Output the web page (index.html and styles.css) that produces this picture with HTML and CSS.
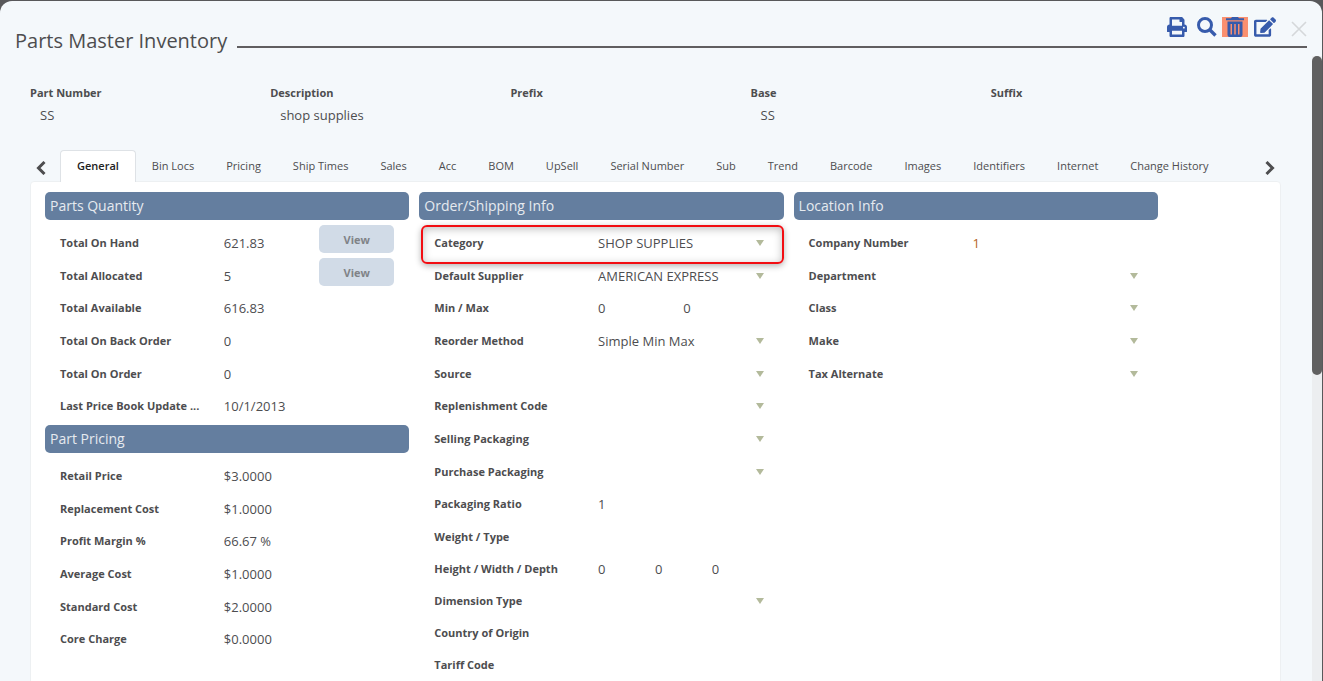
FILE: index.html
```
<!DOCTYPE html>
<html lang="en">
<head>
    <meta charset="UTF-8">
    <meta name="viewport" content="width=device-width, initial-scale=1">
    <title>Parts Master Inventory</title>
    <link rel="stylesheet" href="styles.css">
</head>
<body>
<div class="modal">
    <!-- Title bar -->
    <header class="modal-header">
        <h1>Parts Master Inventory</h1>
        <div class="toolbar">
            <button type="button" class="tool" aria-label="Print">
                <svg width="20" height="20" viewBox="0 0 512 512"><path d="M448 192V77.25c0-8.49-3.37-16.62-9.37-22.63L393.37 9.37c-6-6-14.14-9.37-22.63-9.37H96C78.33 0 64 14.33 64 32v160c-35.35 0-64 28.65-64 64v112c0 8.84 7.16 16 16 16h48v96c0 17.67 14.33 32 32 32h320c17.67 0 32-14.33 32-32v-96h48c8.84 0 16-7.16 16-16V256c0-35.35-28.65-64-64-64zm-64 256H128v-96h256v96zm0-224H128V64h192v48c0 8.84 7.16 16 16 16h48v96zm48 72c-13.25 0-24-10.75-24-24 0-13.26 10.75-24 24-24s24 10.74 24 24c0 13.25-10.75 24-24 24z"/></svg>
            </button>
            <button type="button" class="tool" aria-label="Search">
                <svg width="20" height="20" viewBox="0 0 20 20"><circle cx="8" cy="8" r="6.5" fill="none" stroke="#375bac" stroke-width="3"/><path d="M12.5 12.5l6 6" stroke="#375bac" stroke-width="3.4"/></svg>
            </button>
            <button type="button" class="tool tool-delete" aria-label="Delete">
                <svg width="18" height="20" viewBox="0 0 18 20"><path d="M6 0h6l1 1.3h5v2H0v-2h5zM1.500 4.500h15V18a2 2 0 0 1-2 2h-11a2 2 0 0 1-2-2zM4.500 7v10.500h1.500V7zM8.250 7v10.500h1.500V7zM12 7v10.500h1.500V7z" fill-rule="evenodd"/></svg>
            </button>
            <button type="button" class="tool" aria-label="Edit">
                <svg width="22" height="20" viewBox="0 0 576 512"><path d="M402.600 83.200l90.200 90.200c3.800 3.800 3.800 10 0 13.800L274.400 405.600l-92.800 10.300c-12.400 1.400-22.900-9.100-21.500-21.500l10.300-92.800L388.800 83.200c3.800-3.800 10-3.800 13.800 0zm162-22.900l-48.800-48.800c-15.200-15.200-39.900-15.200-55.200 0l-35.400 35.400c-3.800 3.800-3.800 10 0 13.800l90.200 90.200c3.800 3.800 10 3.800 13.800 0l35.400-35.400c15.200-15.300 15.200-40 0-55.200zM384 346.200V448H64V128h229.800c3.200 0 6.200-1.300 8.500-3.500l40-40c7.600-7.600 2.200-20.500-8.500-20.500H48C21.500 64 0 85.500 0 112v352c0 26.500 21.500 48 48 48h352c26.500 0 48-21.500 48-48V306.200c0-10.700-12.900-16-20.500-8.500l-40 40c-2.200 2.300-3.500 5.300-3.500 8.500z"/></svg>
            </button>
            <button type="button" class="tool tool-close" aria-label="Close">
                <svg width="16" height="16" viewBox="0 0 16 16"><path d="M1 1l14 14M15 1L1 15" fill="none" stroke="#d5d8da" stroke-width="1.600"/></svg>
            </button>
        </div>
    </header>

    <div class="modal-body">
        <main class="content">
            <!-- Part summary -->
            <dl class="summary">
                <div><dt>Part Number</dt><dd>SS</dd></div>
                <div><dt>Description</dt><dd>shop supplies</dd></div>
                <div><dt>Prefix</dt><dd></dd></div>
                <div><dt>Base</dt><dd>SS</dd></div>
                <div><dt>Suffix</dt><dd></dd></div>
            </dl>

            <!-- Tabs -->
            <nav class="tabs">
                <button type="button" class="tab-arrow" aria-label="Previous tabs">
                    <svg width="10" height="14" viewBox="0 0 10 14"><path d="M8.500 1L2.500 7l6 6"/></svg>
                </button>
                <div class="tab-list">
                    <a class="active" href="#general">General</a>
                    <a href="#bin-locs">Bin Locs</a>
                    <a href="#pricing">Pricing</a>
                    <a href="#ship-times">Ship Times</a>
                    <a href="#sales">Sales</a>
                    <a href="#acc">Acc</a>
                    <a href="#bom">BOM</a>
                    <a href="#upsell">UpSell</a>
                    <a href="#serial">Serial Number</a>
                    <a href="#sub">Sub</a>
                    <a href="#trend">Trend</a>
                    <a href="#barcode">Barcode</a>
                    <a href="#images">Images</a>
                    <a href="#identifiers">Identifiers</a>
                    <a href="#internet">Internet</a>
                    <a href="#history">Change History</a>
                </div>
                <button type="button" class="tab-arrow" aria-label="Next tabs">
                    <svg width="10" height="14" viewBox="0 0 10 14"><path d="M1.500 1l6 6-6 6"/></svg>
                </button>
            </nav>

            <div class="panel" id="general">
                <div class="columns">
                    <div class="column">
                        <section>
                            <h2>Parts Quantity</h2>
                            <div class="rows">
                                <div class="row"><label for="onHand">Total On Hand</label><input id="onHand" value="621.83" readonly><button type="button" class="view">View</button></div>
                                <div class="row"><label for="allocated">Total Allocated</label><input id="allocated" value="5" readonly><button type="button" class="view">View</button></div>
                                <div class="row"><label for="available">Total Available</label><input id="available" value="616.83" readonly></div>
                                <div class="row"><label for="backOrder">Total On Back Order</label><input id="backOrder" value="0" readonly></div>
                                <div class="row"><label for="onOrder">Total On Order</label><input id="onOrder" value="0" readonly></div>
                                <div class="row"><label for="lastUpdate">Last Price Book Update ...</label><input id="lastUpdate" value="10/1/2013" readonly></div>
                            </div>
                        </section>
                        <section>
                            <h2>Part Pricing</h2>
                            <div class="rows">
                                <div class="row"><label for="retail">Retail Price</label><input id="retail" value="$3.0000" readonly></div>
                                <div class="row"><label for="replacement">Replacement Cost</label><input id="replacement" value="$1.0000" readonly></div>
                                <div class="row"><label for="margin">Profit Margin %</label><input id="margin" value="66.67 %" readonly></div>
                                <div class="row"><label for="average">Average Cost</label><input id="average" value="$1.0000" readonly></div>
                                <div class="row"><label for="standard">Standard Cost</label><input id="standard" value="$2.0000" readonly></div>
                                <div class="row"><label for="core">Core Charge</label><input id="core" value="$0.0000" readonly></div>
                            </div>
                        </section>
                    </div>

                    <div class="column">
                        <section>
                            <h2>Order/Shipping Info</h2>
                            <div class="rows">
                                <div class="row highlight"><label for="category">Category</label><select id="category"><option>SHOP SUPPLIES</option></select></div>
                                <div class="row"><label for="supplier">Default Supplier</label><select id="supplier"><option>AMERICAN EXPRESS</option></select></div>
                                <div class="row"><label for="min">Min / Max</label><div class="group two"><input id="min" value="0"><input aria-label="Max" value="0"></div></div>
                                <div class="row"><label for="reorder">Reorder Method</label><select id="reorder"><option>Simple Min Max</option></select></div>
                                <div class="row"><label for="source">Source</label><select id="source"><option></option></select></div>
                                <div class="row"><label for="replenish">Replenishment Code</label><select id="replenish"><option></option></select></div>
                                <div class="row"><label for="selling">Selling Packaging</label><select id="selling"><option></option></select></div>
                                <div class="row"><label for="purchase">Purchase Packaging</label><select id="purchase"><option></option></select></div>
                                <div class="row"><label for="ratio">Packaging Ratio</label><input id="ratio" value="1"></div>
                                <div class="row"><label for="weight">Weight / Type</label><input id="weight"></div>
                                <div class="row"><label for="height">Height / Width / Depth</label><div class="group three"><input id="height" value="0"><input aria-label="Width" value="0"><input aria-label="Depth" value="0"></div></div>
                                <div class="row"><label for="dimension">Dimension Type</label><select id="dimension"><option></option></select></div>
                                <div class="row"><label for="country">Country of Origin</label><input id="country"></div>
                                <div class="row"><label for="tariff">Tariff Code</label><input id="tariff"></div>
                            </div>
                        </section>
                    </div>

                    <div class="column">
                        <section>
                            <h2>Location Info</h2>
                            <div class="rows">
                                <div class="row"><label for="company">Company Number</label><input id="company" class="linked" value="1" readonly></div>
                                <div class="row"><label for="department">Department</label><select id="department"><option></option></select></div>
                                <div class="row"><label for="class">Class</label><select id="class"><option></option></select></div>
                                <div class="row"><label for="make">Make</label><select id="make"><option></option></select></div>
                                <div class="row"><label for="tax">Tax Alternate</label><select id="tax"><option></option></select></div>
                            </div>
                        </section>
                    </div>
                </div>
            </div>
        </main>
        <div class="scrollbar"><div class="scroll-thumb"></div></div>
    </div>
</div>
</body>
</html>
```
FILE: styles.css
```
* { box-sizing: border-box; margin: 0; padding: 0; }
body {
    font-family: "Open Sans", "Noto Sans", sans-serif;
    font-size: 13px;
    color: #4d4d4f;
    background: #58585a;
    height: 100vh;
    overflow: hidden;
    padding: 1px 1px 0 0;
}
button, input, select { font: inherit; color: inherit; border: 0; background: none; }
button { cursor: pointer; }

.modal {
    height: 100%;
    display: flex;
    flex-direction: column;
    background: #f4f8fb;
    border-radius: 12px 12px 0 0;
    overflow: hidden;
}

/* Title bar */
.modal-header {
    display: flex;
    flex: none;
    gap: 10px;
    padding: 15px 15px 0;
}
h1 {
    font-size: 20px;
    font-weight: 400;
    line-height: 28px;
    padding-top: 11px;
}
.toolbar {
    flex: 1;
    display: flex;
    justify-content: flex-end;
    align-items: flex-start;
    height: 32px;
    border-bottom: 2px solid #605e60;
}
.tool {
    height: 22px;
    padding: 0 2px;
    display: flex;
    align-items: center;
}
.tool svg { fill: #375bac; }
.tool + .tool { margin-left: 6px; }
.tool-delete svg { background: #fa9070; padding: 0 4px; width: 26px; }
.tool.tool-delete { padding: 0; margin-left: 3px; }
.tool-delete + .tool { margin-left: 4px; }
.tool.tool-close { margin-left: 13px; padding: 4px 0 0; }

/* Scrolling area */
.modal-body { flex: 1; min-height: 0; display: flex; }
.content {
    flex: 1;
    min-width: 0;
    padding: 29px 31px 0 30px;
    overflow: hidden;
}
.scrollbar {
    width: 10px;
    margin-top: 1px;
    background: #eceef0;
}
.scroll-thumb {
    height: 51%;
    border-radius: 5px;
    background: #606060;
}

.summary {
    width: 96%;
    display: grid;
    grid-template-columns: repeat(5, 1fr);
    height: 66px;
}
dt { font-size: 11px; font-weight: 700; line-height: 18px; }
dd { padding: 3px 0 0 10px; line-height: 20px; }

/* Tabs */
.tabs { display: flex; height: 32px; }
.tab-arrow { width: 30px; padding: 4px 14px 0 6px; line-height: 0; }
.tab-arrow path { fill: none; stroke: #4d4d4f; stroke-width: 3; }
.tab-arrow:last-child { width: 22px; padding: 4px 6px 0; }
.tab-list { flex: 1; display: flex; min-width: 0; overflow: hidden; }
.tab-list a {
    padding: 0 16px;
    font-size: 11px;
    line-height: 32px;
    color: #4d4d4f;
    text-decoration: none;
    white-space: nowrap;
}
.tab-list a.active {
    font-weight: 600;
    line-height: 30px;
    color: #222;
    background: #fff;
    border: 1px solid #dee2e6;
    border-bottom: 0;
    border-radius: 4px 4px 0 0;
}

.panel {
    background: #fff;
    border: 1px solid #edf0f2;
    border-radius: 4px 4px 0 0;
    padding: 10px 12px 10px 14px;
    min-height: 600px;
    margin-top: -1px;
}
.columns {
    width: 91%;
    display: grid;
    grid-template-columns: repeat(3, 1fr);
    gap: 10px;
}
h2 {
    height: 28px;
    padding: 0 5px;
    border-radius: 5px;
    background: #647e9f;
    color: #e6eaef;
    font-size: 14px;
    font-weight: 400;
    line-height: 28px;
}
.rows { padding: 5px 15px 4px; }

/* Field rows */
.row {
    position: relative;
    display: flex;
    align-items: flex-start;
    height: 33px;
}
.row:nth-child(3n+2), .row:nth-child(n+10) { height: 32px; }
.row label {
    width: 49%;
    flex: none;
    font-size: 11px;
    font-weight: 700;
    line-height: 36px;
    white-space: nowrap;
}
.row input, .row select {
    flex: 1;
    min-width: 0;
    height: 36px;
    outline: 0;
}
.row select {
    appearance: none;
    background: url("data:image/svg+xml,%3Csvg xmlns='http://www.w3.org/2000/svg' width='8' height='6'%3E%3Cpath d='M0 0h8L4 6z' fill='%23b3ba9b'/%3E%3C/svg%3E") no-repeat right 5px center;
}
.group { flex: 1; min-width: 0; display: grid; }
.group.two { grid-template-columns: 1fr 1fr; }
.group.three { grid-template-columns: 1fr 1fr 1fr; }
.row .linked { color: #b5651d; }
.view {
    width: 75px;
    height: 28px;
    border-radius: 5px;
    background: #d1dbe7;
    color: #808387;
    font-size: 11px;
    font-weight: 700;
}

.highlight::after {
    content: "";
    position: absolute;
    inset: 0 -15px -6px -13px;
    border: 2px solid #f20d12;
    border-radius: 6px;
    box-shadow: 0 2px 6px rgba(0,0,0,0.3), inset 0 2px 8px rgba(0,0,0,0.25);
    pointer-events: none;
}
```
